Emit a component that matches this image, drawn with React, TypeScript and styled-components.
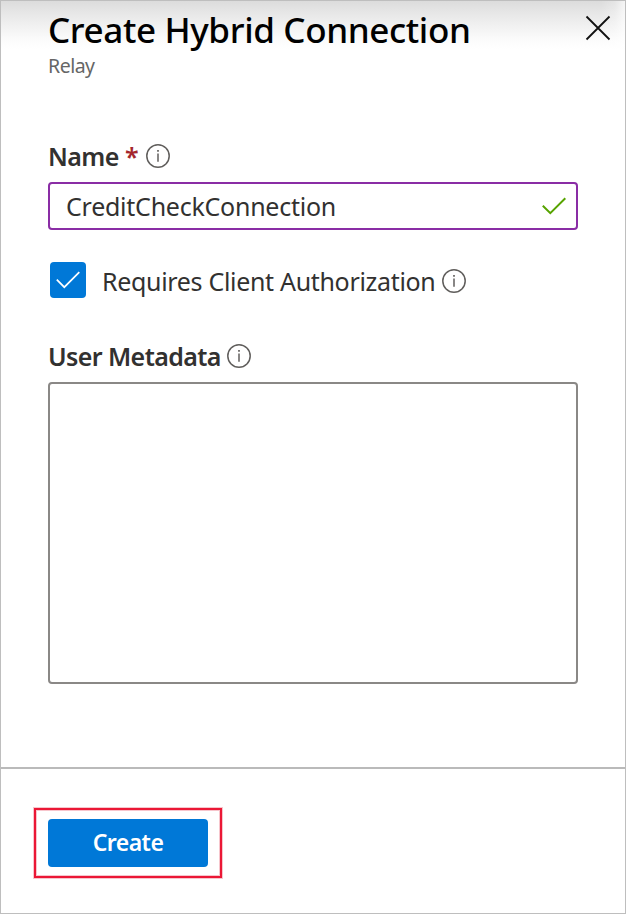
import React from "react";
import styled, { createGlobalStyle } from "styled-components";

const GlobalStyle = createGlobalStyle`
  *, *::before, *::after { box-sizing: border-box; }
  body { margin: 0; background: #fff; }
  button, input, textarea { font: inherit; letter-spacing: inherit; }
`;

const Panel = styled.main`
  display: flex;
  flex-direction: column;
  width: 626px;
  height: 914px;
  border: 1px solid #bebebe;
  background: #fff;
  color: #323130;
  font-family: "Noto Sans", "Open Sans", sans-serif;
  font-size: 25px;
  line-height: 32px;
`;

const Header = styled.header`
  display: flex;
  justify-content: space-between;
  height: 139px;
  padding: 6px 14px 0 47px;
  background:
    linear-gradient(to left, rgba(255, 255, 255, 0.7) 0, rgba(255, 255, 255, 0.25) 10px, rgba(255, 255, 255, 0) 24px) top right / 24px 48px no-repeat,
    linear-gradient(#dcdcdc 0, #e6e6e6 11px, #f1f1f1 25px, #fbfbfb 38px, #fff 48px) top / 100% 48px no-repeat;
`;

const Title = styled.h1`
  margin: 0;
  color: #000;
  font-size: 35px;
  font-weight: 500;
  line-height: 46px;
  letter-spacing: -0.37px;
  white-space: nowrap;
`;

const Subtitle = styled.div`
  margin-top: -1px;
  color: #666;
  font-size: 19.5px;
  line-height: 28px;
  letter-spacing: -0.5px;
`;

const CloseButton = styled.button`
  width: 26px;
  height: 26px;
  margin-top: 8px;
  padding: 0;
  border: 0;
  background: none;
  svg { display: block; }
`;

const Form = styled.form`
  display: flex;
  flex-direction: column;
  height: 627px;
  padding: 0 47px;
`;

const LabelRow = styled.div`
  display: flex;
  align-items: center;
  height: 32px;
  margin-bottom: 10px;
  svg { flex: none; }
`;

const Label = styled.label<{ $width: number }>`
  width: ${(p) => p.$width}px;
  font-weight: 600;
  letter-spacing: -0.6px;
  white-space: nowrap;
`;

const Required = styled.span`
  width: 21px;
  color: #a4262c;
  font-weight: 600;
`;

const InputFrame = styled.div`
  display: flex;
  align-items: center;
  width: 530px;
  height: 48px;
  padding: 0 10px 0 16px;
  border: 2px solid #8a2da5;
  border-radius: 4px;
`;

const TextInput = styled.input`
  flex: 1;
  min-width: 0;
  height: 40px;
  padding: 0;
  border: 0;
  outline: 0;
  background: none;
  color: #323130;
  letter-spacing: -0.25px;
`;

const CheckRow = styled.div`
  display: flex;
  align-items: center;
  height: 36px;
  margin: 32px 0 42px 2px;
`;

const InfoSlot = styled.span`
  display: flex;
  padding-top: 2px;
`;

const CheckBox = styled.span`
  display: grid;
  place-items: center;
  width: 36px;
  height: 36px;
  margin-right: 16px;
  border-radius: 4px;
  background: #0078d7;
`;

const CheckLabel = styled.span`
  width: 340px;
  padding-top: 2px;
  letter-spacing: -0.32px;
  white-space: nowrap;
`;

const Metadata = styled.textarea`
  display: block;
  width: 530px;
  height: 302px;
  padding: 8px 16px;
  border: 2px solid #8a8886;
  border-radius: 4px;
  outline: 0;
  resize: none;
`;

const Footer = styled.footer`
  flex: 1;
  padding: 39px 0 0 33px;
  border-top: 2px solid #bababa;
`;

const Highlight = styled.div`
  display: grid;
  place-items: center;
  width: 188px;
  height: 70px;
  border: 2px solid #eb1735;
  box-shadow: 0 0 0 1px #f7c5cc, inset 0 0 0 1px #f7c5cc;
`;

const CreateButton = styled.button`
  width: 160px;
  height: 48px;
  padding: 0 0 2px;
  border: 0;
  border-radius: 4px;
  background: #0078d7;
  color: #fff;
  font-size: 23px;
  font-weight: 600;
  letter-spacing: -0.55px;
`;

const InfoIcon = () => (
  <svg width="24" height="24" viewBox="0 0 24 24" fill="none" aria-hidden="true">
    <circle cx="12" cy="12" r="11.2" stroke="#605e5c" strokeWidth="1.5" />
    <path d="M12 9.5V17.8" stroke="#605e5c" strokeWidth="1.5" />
    <path d="M12 6V7.8" stroke="#605e5c" strokeWidth="1.7" />
  </svg>
);

const Tick = ({ color, width }: { color: string; width: number }) => (
  <svg width="24" height="18" viewBox="0 0 24 18" fill="none" aria-hidden="true">
    <path d="M0.8 8.7L8.3 16.2L23.3 1.2" stroke={color} strokeWidth={width} />
  </svg>
);

export default function App() {
  return (
    <>
      <GlobalStyle />
      <Panel>
        <Header>
          <div>
            <Title>Create Hybrid Connection</Title>
            <Subtitle>Relay</Subtitle>
          </div>
          <CloseButton aria-label="Close">
            <svg width="26" height="26" viewBox="0 0 26 26" fill="none">
              <path d="M1.5 1.5L24.5 24.5M24.5 1.5L1.5 24.5" stroke="#111" strokeWidth="1.8" />
            </svg>
          </CloseButton>
        </Header>
        <Form>
          <LabelRow>
            <Label htmlFor="name" $width={77}>Name</Label>
            <Required>*</Required>
            <InfoIcon />
          </LabelRow>
          <InputFrame>
            <TextInput id="name" defaultValue="CreditCheckConnection" spellCheck={false} />
            <Tick color="#57a300" width={2} />
          </InputFrame>
          <CheckRow>
            <CheckBox role="checkbox" aria-checked="true">
              <Tick color="#fff" width={1.7} />
            </CheckBox>
            <CheckLabel>Requires Client Authorization</CheckLabel>
            <InfoSlot>
              <InfoIcon />
            </InfoSlot>
          </CheckRow>
          <LabelRow>
            <Label htmlFor="metadata" $width={179}>User Metadata</Label>
            <InfoIcon />
          </LabelRow>
          <Metadata id="metadata" />
        </Form>
        <Footer>
          <Highlight>
            <CreateButton>Create</CreateButton>
          </Highlight>
        </Footer>
      </Panel>
    </>
  );
}
